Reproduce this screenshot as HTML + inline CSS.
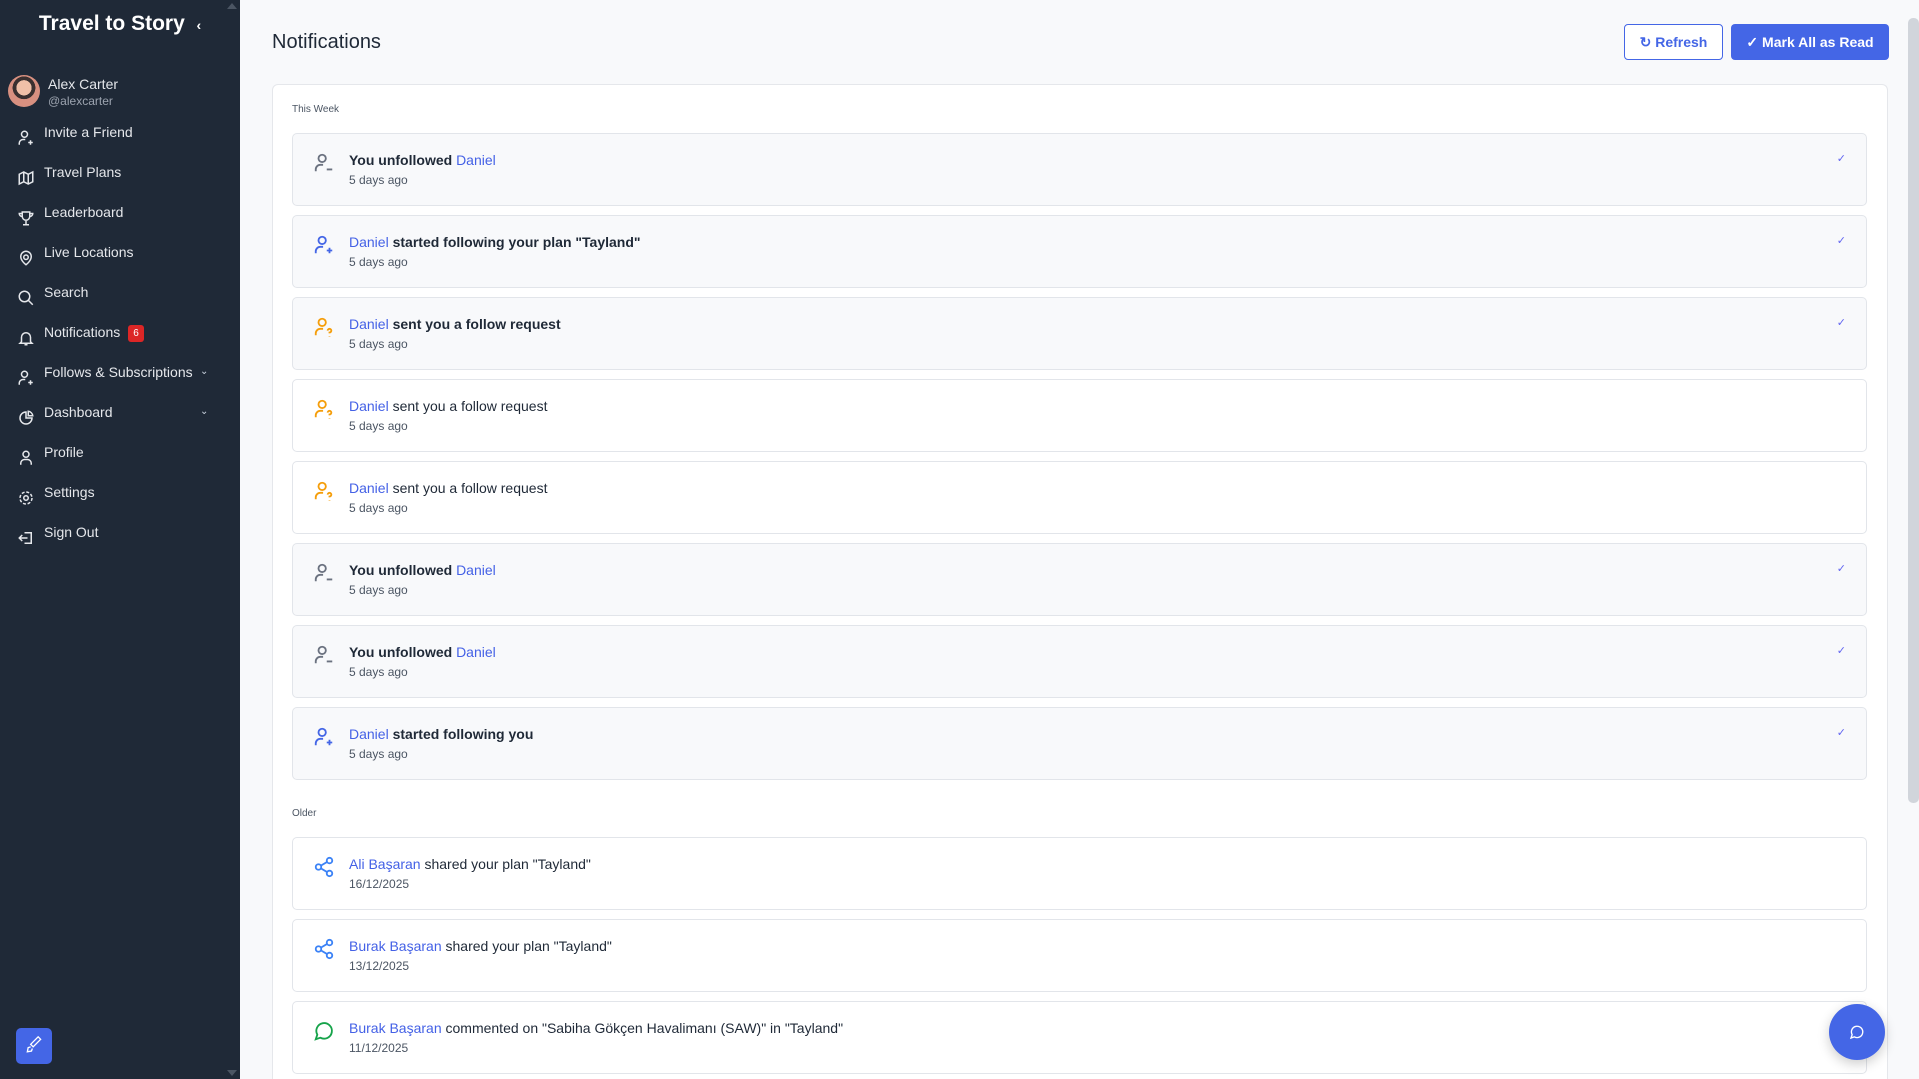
<!DOCTYPE html>
<html style="overflow:hidden"><head><meta charset="utf-8"><style>
*{box-sizing:border-box;margin:0;padding:0}
html,body{width:1919px;height:1079px;overflow:hidden}
body{background:#f8f9fb;font-family:"Liberation Sans",sans-serif;position:relative}
.sb{position:absolute;left:0;top:0;width:240px;height:1079px;background:#1f2937;color:#e5e7eb}
.title{position:absolute;left:0;width:240px;top:12px;text-align:center;font-size:21px;font-weight:bold;color:#fff}
.av{position:absolute;left:8px;top:75px;width:32px;height:32px;border-radius:50%;background:radial-gradient(circle at 50% 40%,#f0c0a8 0 30%,#3a3030 31% 45%,#d89080 46%)}
.nm{position:absolute;left:48px;top:76px;font-size:14px;color:#e5e7eb}
.hd{position:absolute;left:48px;top:94px;font-size:12px;color:#9ca3af}
.it{position:absolute;left:44px;font-size:14px;color:#e5e7eb}
.ic{position:absolute;left:17px;width:18px;height:18px}
.badge{display:inline-block;background:#dc2626;color:#fff;font-size:10px;border-radius:3px;padding:3px 5px;margin-left:8px;vertical-align:1px}
.chev{position:absolute;left:200px;font-size:10px;color:#cbd5e1}
h1{position:absolute;left:272px;top:31px;font-size:20px;font-weight:normal;color:#1f2937}
.btn{position:absolute;top:24px;height:36px;border-radius:4px;font-size:14px;font-weight:bold;display:flex;align-items:center;justify-content:center;gap:6px}
.card{position:absolute;left:272px;top:84px;width:1616px;height:995px;background:#fff;border:1px solid #e5e7eb;border-bottom:none;border-radius:6px 6px 0 0}
.lab{position:absolute;left:292px;font-size:10px;color:#4b5563}
.row{position:absolute;left:292px;width:1575px;height:73px;border:1px solid #e2e5ea;border-radius:5px;background:#fff}
.row.u{background:#f8f9fb}
.row svg.i{position:absolute;left:20px;top:18px;width:22px;height:22px}
.t1{position:absolute;left:56px;top:18px;font-size:14px;color:#1f2937}
.row.u .t1{font-weight:bold;color:#1f2937}
.t1 a{color:#4461e6;font-weight:normal;text-decoration:none}
.t2{position:absolute;left:56px;top:39px;font-size:12px;color:#4b5563}
.ck{position:absolute;right:20px;top:18px;font-size:11px;color:#6366f1}
</style></head><body>
<div class="sb">
<div class="title">Travel to Story &nbsp;<span style="font-size:14px">‹</span></div>
<div style="position:absolute;left:227px;top:3px;width:0;height:0;border-left:5px solid transparent;border-right:5px solid transparent;border-bottom:6px solid #4b5563"></div>
<div style="position:absolute;left:227px;top:1070px;width:0;height:0;border-left:5px solid transparent;border-right:5px solid transparent;border-top:6px solid #4b5563"></div>
<div class="av"></div><div class="nm">Alex Carter</div><div class="hd">@alexcarter</div>
<svg class="ic" style="top:129px" viewBox="0 0 24 24" fill="none" stroke="#e5e7eb" stroke-width="2"><circle cx="10" cy="7" r="4"/><path d="M3 21v-2a5 5 0 0 1 5-5h3M18 15v6M15 18h6"/></svg><div class="it" style="top:124px">Invite a Friend</div>
<svg class="ic" style="top:169px" viewBox="0 0 24 24" fill="none" stroke="#e5e7eb" stroke-width="2"><path d="M3 7l6-3 6 3 6-3v13l-6 3-6-3-6 3z M9 4v13 M15 7v13"/></svg><div class="it" style="top:164px">Travel Plans</div>
<svg class="ic" style="top:209px" viewBox="0 0 24 24" fill="none" stroke="#e5e7eb" stroke-width="2"><path d="M7 4h10v6a5 5 0 0 1-10 0zM7 6H3a4 4 0 0 0 4 4M17 6h4a4 4 0 0 1-4 4M12 15v5M8 21h8"/></svg><div class="it" style="top:204px">Leaderboard</div>
<svg class="ic" style="top:249px" viewBox="0 0 24 24" fill="none" stroke="#e5e7eb" stroke-width="2"><circle cx="12" cy="11" r="3"/><path d="M12 21s-7-5-7-11a7 7 0 0 1 14 0c0 6-7 11-7 11z"/></svg><div class="it" style="top:244px">Live Locations</div>
<svg class="ic" style="top:289px" viewBox="0 0 24 24" fill="none" stroke="#e5e7eb" stroke-width="2"><circle cx="10" cy="10" r="7"/><path d="M15 15l6 6"/></svg><div class="it" style="top:284px">Search</div>
<svg class="ic" style="top:329px" viewBox="0 0 24 24" fill="none" stroke="#e5e7eb" stroke-width="2"><path d="M6 17V11a6 6 0 0 1 12 0v6l2 2H4zM10 21h4"/></svg><div class="it" style="top:324px">Notifications<span class="badge">6</span></div>
<svg class="ic" style="top:369px" viewBox="0 0 24 24" fill="none" stroke="#e5e7eb" stroke-width="2"><circle cx="10" cy="7" r="4"/><path d="M3 21v-2a5 5 0 0 1 5-5h3M18 15v6M15 18h6"/></svg><div class="it" style="top:364px">Follows &amp; Subscriptions</div><div class="chev" style="top:366px">⌄</div>
<svg class="ic" style="top:409px" viewBox="0 0 24 24" fill="none" stroke="#e5e7eb" stroke-width="2"><path d="M12 4a8 8 0 1 0 8 8h-8z M15 3a7 7 0 0 1 6 6h-6z"/></svg><div class="it" style="top:404px">Dashboard</div><div class="chev" style="top:406px">⌄</div>
<svg class="ic" style="top:449px" viewBox="0 0 24 24" fill="none" stroke="#e5e7eb" stroke-width="2"><circle cx="12" cy="7" r="4"/><path d="M5 21v-2a5 5 0 0 1 5-5h4a5 5 0 0 1 5 5v2"/></svg><div class="it" style="top:444px">Profile</div>
<svg class="ic" style="top:489px" viewBox="0 0 24 24" fill="none" stroke="#e5e7eb" stroke-width="2"><circle cx="12" cy="12" r="3"/><circle cx="12" cy="12" r="8" stroke-dasharray="4 2.3"/></svg><div class="it" style="top:484px">Settings</div>
<svg class="ic" style="top:529px" viewBox="0 0 24 24" fill="none" stroke="#e5e7eb" stroke-width="2"><path d="M10 5h9v14h-9M14 12H3M7 8l-4 4 4 4"/></svg><div class="it" style="top:524px">Sign Out</div>
<div style="position:absolute;left:16px;top:1028px;width:36px;height:36px;background:#4466e6;border-radius:5px"><svg viewBox="0 0 24 24" width="20" height="20" style="margin:8px" fill="none" stroke="#fff" stroke-width="1.6"><path d="M20 4l-9 9-3-3 9-9zM8 13l-3 1-1 5 5-1 1-3"/></svg></div>
</div>
<h1>Notifications</h1>
<div class="btn" style="left:1624px;width:99px;border:1.5px solid #4466e6;color:#4466e6;background:#fff">↻ Refresh</div>
<div class="btn" style="left:1731px;width:158px;background:#4466e6;color:#fff">✓ Mark All as Read</div>
<div style="position:absolute;left:1908px;top:18px;width:11px;height:785px;background:#d1d5db;border-radius:5px"></div>
<div class="card"></div>
<div class="lab" style="top:104px">This Week</div>
<div class="lab" style="top:808px">Older</div>

<div class="row u" style="top:133px"><svg class="i" viewBox="0 0 24 24" fill="none" stroke="#6b7280" stroke-width="2"><circle cx="10" cy="7" r="4"/><path d="M3 21v-2a5 5 0 0 1 5-5h3M15 19h6"/></svg><div class="t1">You unfollowed <a>Daniel</a></div><div class="t2">5 days ago</div><div class="ck">✓</div></div>
<div class="row u" style="top:215px"><svg class="i" viewBox="0 0 24 24" fill="none" stroke="#4466e6" stroke-width="2"><circle cx="10" cy="7" r="4"/><path d="M3 21v-2a5 5 0 0 1 5-5h3M18 15v6M15 18h6"/></svg><div class="t1"><a>Daniel</a> started following your plan "Tayland"</div><div class="t2">5 days ago</div><div class="ck">✓</div></div>
<div class="row u" style="top:297px"><svg class="i" viewBox="0 0 24 24" fill="none" stroke="#f59e0b" stroke-width="2"><circle cx="10" cy="7" r="4"/><path d="M3 21v-2a5 5 0 0 1 5-5h3M16 16a2 2 0 1 1 2 2v1M18 22v.5"/></svg><div class="t1"><a>Daniel</a> sent you a follow request</div><div class="t2">5 days ago</div><div class="ck">✓</div></div>
<div class="row" style="top:379px"><svg class="i" viewBox="0 0 24 24" fill="none" stroke="#f59e0b" stroke-width="2"><circle cx="10" cy="7" r="4"/><path d="M3 21v-2a5 5 0 0 1 5-5h3M16 16a2 2 0 1 1 2 2v1M18 22v.5"/></svg><div class="t1"><a>Daniel</a> sent you a follow request</div><div class="t2">5 days ago</div></div>
<div class="row" style="top:461px"><svg class="i" viewBox="0 0 24 24" fill="none" stroke="#f59e0b" stroke-width="2"><circle cx="10" cy="7" r="4"/><path d="M3 21v-2a5 5 0 0 1 5-5h3M16 16a2 2 0 1 1 2 2v1M18 22v.5"/></svg><div class="t1"><a>Daniel</a> sent you a follow request</div><div class="t2">5 days ago</div></div>
<div class="row u" style="top:543px"><svg class="i" viewBox="0 0 24 24" fill="none" stroke="#6b7280" stroke-width="2"><circle cx="10" cy="7" r="4"/><path d="M3 21v-2a5 5 0 0 1 5-5h3M15 19h6"/></svg><div class="t1">You unfollowed <a>Daniel</a></div><div class="t2">5 days ago</div><div class="ck">✓</div></div>
<div class="row u" style="top:625px"><svg class="i" viewBox="0 0 24 24" fill="none" stroke="#6b7280" stroke-width="2"><circle cx="10" cy="7" r="4"/><path d="M3 21v-2a5 5 0 0 1 5-5h3M15 19h6"/></svg><div class="t1">You unfollowed <a>Daniel</a></div><div class="t2">5 days ago</div><div class="ck">✓</div></div>
<div class="row u" style="top:707px"><svg class="i" viewBox="0 0 24 24" fill="none" stroke="#4466e6" stroke-width="2"><circle cx="10" cy="7" r="4"/><path d="M3 21v-2a5 5 0 0 1 5-5h3M18 15v6M15 18h6"/></svg><div class="t1"><a>Daniel</a> started following you</div><div class="t2">5 days ago</div><div class="ck">✓</div></div>

<div class="row" style="top:837px"><svg class="i" viewBox="0 0 24 24" fill="none" stroke="#3b82f6" stroke-width="2"><circle cx="18" cy="5" r="3"/><circle cx="6" cy="12" r="3"/><circle cx="18" cy="19" r="3"/><path d="M8.6 13.5l6.8 4M15.4 6.5l-6.8 4"/></svg><div class="t1"><a>Ali Başaran</a> shared your plan "Tayland"</div><div class="t2">16/12/2025</div></div>
<div class="row" style="top:919px"><svg class="i" viewBox="0 0 24 24" fill="none" stroke="#3b82f6" stroke-width="2"><circle cx="18" cy="5" r="3"/><circle cx="6" cy="12" r="3"/><circle cx="18" cy="19" r="3"/><path d="M8.6 13.5l6.8 4M15.4 6.5l-6.8 4"/></svg><div class="t1"><a>Burak Başaran</a> shared your plan "Tayland"</div><div class="t2">13/12/2025</div></div>
<div class="row" style="top:1001px"><svg class="i" viewBox="0 0 24 24" fill="none" stroke="#16a34a" stroke-width="2"><path d="M3 21l1.7-5A8.5 8.5 0 1 1 8 19.3z"/></svg><div class="t1"><a>Burak Başaran</a> commented on "Sabiha Gökçen Havalimanı (SAW)" in "Tayland"</div><div class="t2">11/12/2025</div></div>

<div style="position:absolute;left:1829px;top:1004px;width:56px;height:56px;border-radius:50%;background:#4466e6;box-shadow:0 4px 12px rgba(0,0,0,.2)"><svg viewBox="0 0 24 24" width="16" height="16" style="margin:20px" fill="none" stroke="#fff" stroke-width="2"><path d="M3 21l1.7-5A8.5 8.5 0 1 1 8 19.3z"/></svg></div>
</body></html>
